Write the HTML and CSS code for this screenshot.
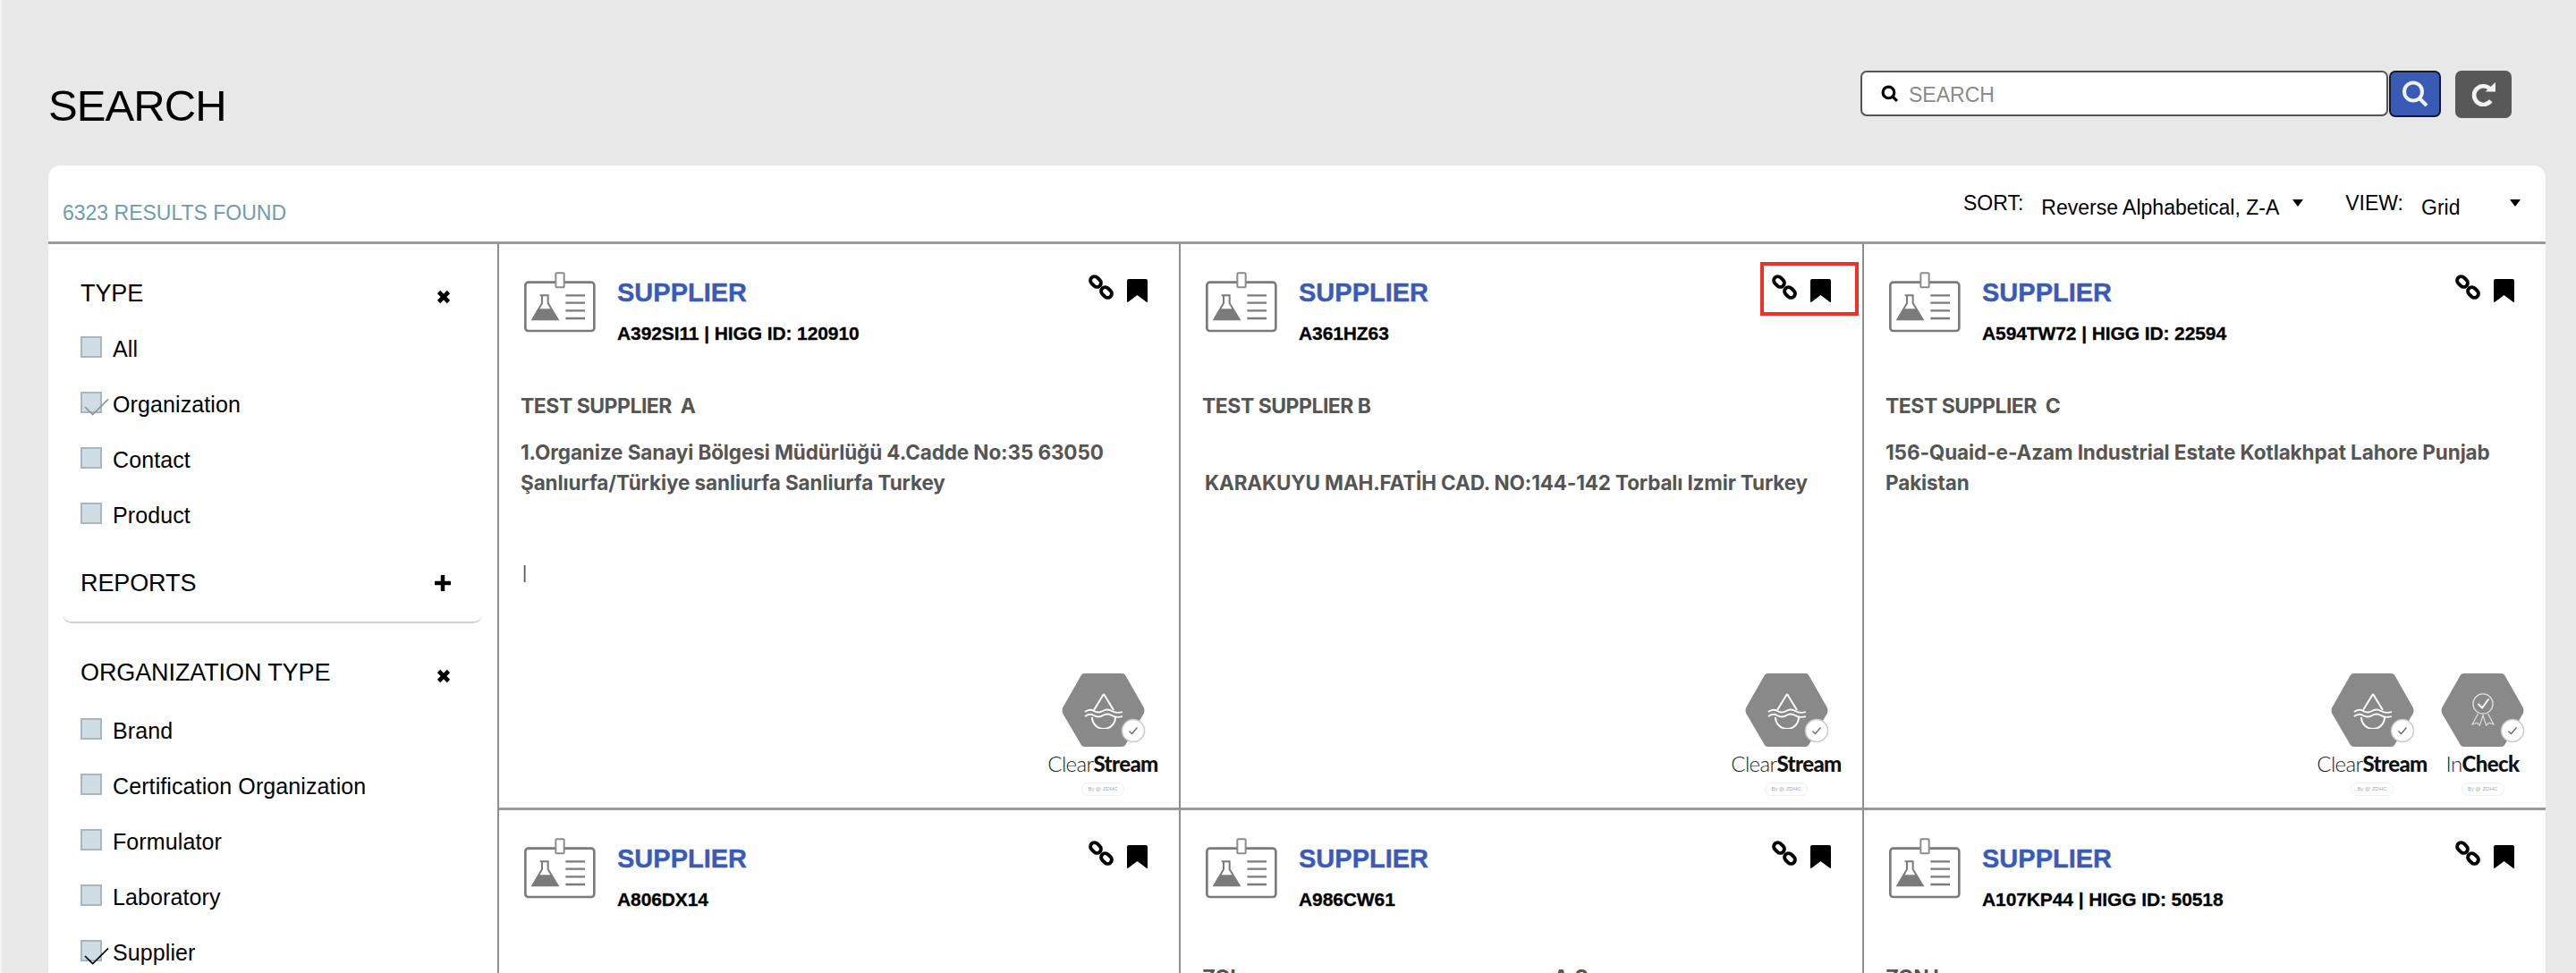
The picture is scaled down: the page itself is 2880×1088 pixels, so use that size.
FILE: index.html
```html
<!DOCTYPE html>
<html lang="en">
<head>
<meta charset="utf-8">
<title>Search</title>
<link rel="stylesheet" href="styles.css">
</head>
<body>
<svg class="sprites" width="0" height="0" aria-hidden="true">
  <symbol id="i-supplier" viewBox="78 72 240 204">
    <rect x="82" y="107" width="231" height="163" rx="10" fill="#fff" stroke="#7b7b7b" stroke-width="8"/>
    <rect x="184" y="76" width="28" height="48" rx="3" fill="#fff" stroke="#8c8c8c" stroke-width="6"/>
    <path d="M131 151h30M138 151v26l-32 55h85l-33-55v-26" fill="none" stroke="#7b7b7b" stroke-width="6"/>
    <path d="M127 196h43l20 36h-85z" fill="#7b7b7b"/>
    <path d="M217 151h65M217 176h65M217 202h65M217 228h65" stroke="#7b7b7b" stroke-width="7"/>
  </symbol>
  <symbol id="i-link" viewBox="0 0 30 30">
    <rect x="2.500" y="4.500" width="13" height="9" rx="4.500" transform="rotate(45 9 9)" fill="none" stroke="#000" stroke-width="3.900"/>
    <rect x="14.500" y="16.500" width="13" height="9" rx="4.500" transform="rotate(45 21 21)" fill="none" stroke="#000" stroke-width="3.900"/>
  </symbol>
  <symbol id="i-bookmark" viewBox="0 0 23 26">
    <path d="M0 2Q0 0 2 0H21Q23 0 23 2V25Q23 26.500 21.500 25.500L11.500 18 1.500 25.500Q0 26.500 0 25Z" fill="#000"/>
  </symbol>
  <symbol id="i-hex" viewBox="0 0 94 84">
    <path d="M22 2Q23 0 26 0H68Q71 0 72 2L93 39Q94 42 93 45L72 81Q71 83 68 83H26Q23 83 22 81L1 45Q0 42 1 39Z" fill="#898989"/>
  </symbol>
  <symbol id="i-check" viewBox="0 0 28 28">
    <circle cx="14" cy="14" r="12.500" fill="#fff" stroke="#c9c9c9" stroke-width="1.500"/>
    <path d="M9.500 14.500l3 3 6-7" fill="none" stroke="#666" stroke-width="1.300"/>
  </symbol>
  <symbol id="i-water" viewBox="0 0 44 40">
    <path d="M22 1L11 19M22 1l11 18M9 27a13 13 0 0 0 26 0" fill="none" stroke="#fff" stroke-width="2"/>
    <path d="M1 21q5-4 10-1t10 0 10 0 12 1M1 26q5-4 10-1t10 0 10 0 12 1" fill="none" stroke="#fff" stroke-width="1.800"/>
  </symbol>
  <symbol id="i-award" viewBox="0 0 28 40">
    <circle cx="14" cy="13" r="12" fill="none" stroke="#ddd" stroke-width="1.500"/>
    <path d="M8 13l5 5 8-11" fill="none" stroke="#fff" stroke-width="2"/>
    <path d="M8 25L1 38l6-2 3 3 4-12 4 12 3-3 6 2-7-13" fill="none" stroke="#ddd" stroke-width="1.300"/>
  </symbol>
  <symbol id="i-tick" viewBox="0 0 30 20">
    <path d="M1 10l9 9L28 1" fill="none" stroke="currentColor" stroke-width="1.700"/>
  </symbol>
  <symbol id="i-close" viewBox="0 0 16 16">
    <path d="M2.500 2.500l11 11M13.500 2.500l-11 11" stroke="#000" stroke-width="4.600"/>
  </symbol>
  <symbol id="i-plus" viewBox="0 0 18 18">
    <path d="M9 1v16M1 9h16" stroke="#000" stroke-width="4.400" stroke-linecap="round"/>
  </symbol>
</svg>

<div class="page">
  <header class="top">
    <h1 class="title">SEARCH</h1>
    <div class="tools">
      <div class="search-box">
        <svg class="search-glass" viewBox="0 0 18 18"><circle cx="8" cy="8" r="6" fill="none" stroke="#000" stroke-width="3"/><path d="M12 12l5 5" stroke="#000" stroke-width="3"/></svg>
        <span class="placeholder">SEARCH</span>
      </div>
      <button class="btn-go" type="button" aria-label="Search">
        <svg class="btn-go-icon" viewBox="0 0 30 30"><circle cx="13" cy="12.500" r="10" fill="none" stroke="#f1f1f1" stroke-width="4"/><path d="M20 20l8 8" stroke="#f1f1f1" stroke-width="4"/></svg>
      </button>
      <button class="btn-reset" type="button" aria-label="Reset">
        <svg class="btn-reset-icon" viewBox="0 0 28 26"><path d="M21 7A10 10 0 1 0 22 20" fill="none" stroke="#f3f3f3" stroke-width="4.500"/><path d="M16 10L27 10 27 0z" fill="#f3f3f3"/></svg>
      </button>
    </div>
  </header>

  <main class="panel">
    <div class="panel-head">
      <span class="count">6323 RESULTS FOUND</span>
      <div class="sorts">
        <span class="sort-label">SORT:</span>
        <span class="sort-value sort-value-long">Reverse Alphabetical, Z-A</span>
        <span class="caret caret-sort"></span>
        <span class="sort-label view-label">VIEW:</span>
        <span class="sort-value sort-value-short">Grid</span>
        <span class="caret"></span>
      </div>
    </div>

    <div class="panel-body">
      <aside class="sidebar">
        <section class="filter filter-type">
          <div class="filter-head"><h2 class="filter-title">TYPE</h2><svg class="icon-close"><use href="#i-close"/></svg></div>
          <label class="opt"><span class="box"></span>All</label>
          <label class="opt"><span class="box"><svg class="tick tick-grey"><use href="#i-tick"/></svg></span>Organization</label>
          <label class="opt"><span class="box"></span>Contact</label>
          <label class="opt"><span class="box"></span>Product</label>
        </section>
        <section class="filter filter-reports">
          <div class="filter-head"><h2 class="filter-title">REPORTS</h2><svg class="icon-plus"><use href="#i-plus"/></svg></div>
        </section>
        <section class="filter filter-org">
          <div class="filter-head"><h2 class="filter-title">ORGANIZATION TYPE</h2><svg class="icon-close"><use href="#i-close"/></svg></div>
          <label class="opt"><span class="box"></span>Brand</label>
          <label class="opt"><span class="box"></span>Certification Organization</label>
          <label class="opt"><span class="box"></span>Formulator</label>
          <label class="opt"><span class="box"></span>Laboratory</label>
          <label class="opt"><span class="box"><svg class="tick"><use href="#i-tick"/></svg></span>Supplier</label>
        </section>
      </aside>

      <div class="grid">
        <article class="cell">
          <div class="cell-head">
            <svg class="icon-supplier"><use href="#i-supplier"/></svg>
            <div class="cell-id"><div class="kind">SUPPLIER</div><div class="ref">A392SI11 | HIGG ID: 120910</div></div>
            <div class="actions"><svg class="icon-link"><use href="#i-link"/></svg><svg class="icon-bookmark"><use href="#i-bookmark"/></svg></div>
          </div>
          <div class="cell-text">
            <div class="name">TEST SUPPLIER &nbsp;A</div>
            <div class="addr">1.Organize Sanayi Bölgesi Müdürlüğü 4.Cadde No:35 63050<br>Şanlıurfa/Türkiye sanliurfa Sanliurfa Turkey</div>
            <div class="bar">|</div>
          </div>
          <div class="badges">
            <div class="badge badge-wide">
              <div class="hex"><svg class="hex-bg"><use href="#i-hex"/></svg><svg class="hex-water"><use href="#i-water"/></svg><svg class="hex-check"><use href="#i-check"/></svg></div>
              <div class="badge-name">Clear<b>Stream</b></div>
              <div class="pill">By @ ZDHC</div>
            </div>
          </div>
        </article>

        <article class="cell">
          <div class="cell-head">
            <svg class="icon-supplier"><use href="#i-supplier"/></svg>
            <div class="cell-id"><div class="kind">SUPPLIER</div><div class="ref">A361HZ63</div></div>
            <div class="actions"><svg class="icon-link"><use href="#i-link"/></svg><svg class="icon-bookmark"><use href="#i-bookmark"/></svg></div>
          </div>
          <div class="mark"></div>
          <div class="cell-text">
            <div class="name">TEST SUPPLIER B</div>
            <div class="addr addr-indent"><br>KARAKUYU MAH.FATİH CAD. NO:144-142 Torbalı Izmir Turkey</div>
          </div>
          <div class="badges">
            <div class="badge badge-wide">
              <div class="hex"><svg class="hex-bg"><use href="#i-hex"/></svg><svg class="hex-water"><use href="#i-water"/></svg><svg class="hex-check"><use href="#i-check"/></svg></div>
              <div class="badge-name">Clear<b>Stream</b></div>
              <div class="pill">By @ ZDHC</div>
            </div>
          </div>
        </article>

        <article class="cell cell-end">
          <div class="cell-head">
            <svg class="icon-supplier"><use href="#i-supplier"/></svg>
            <div class="cell-id"><div class="kind">SUPPLIER</div><div class="ref">A594TW72 | HIGG ID: 22594</div></div>
            <div class="actions"><svg class="icon-link"><use href="#i-link"/></svg><svg class="icon-bookmark"><use href="#i-bookmark"/></svg></div>
          </div>
          <div class="cell-text">
            <div class="name">TEST SUPPLIER &nbsp;C</div>
            <div class="addr">156-Quaid-e-Azam Industrial Estate Kotlakhpat Lahore Punjab<br>Pakistan</div>
          </div>
          <div class="badges">
            <div class="badge badge-wide">
              <div class="hex"><svg class="hex-bg"><use href="#i-hex"/></svg><svg class="hex-water"><use href="#i-water"/></svg><svg class="hex-check"><use href="#i-check"/></svg></div>
              <div class="badge-name">Clear<b>Stream</b></div>
              <div class="pill">By @ ZDHC</div>
            </div>
            <div class="badge">
              <div class="hex"><svg class="hex-bg"><use href="#i-hex"/></svg><svg class="hex-award"><use href="#i-award"/></svg><svg class="hex-check"><use href="#i-check"/></svg></div>
              <div class="badge-name">In<b>Check</b></div>
              <div class="pill">By @ ZDHC</div>
            </div>
          </div>
        </article>

        <article class="cell">
          <div class="cell-head">
            <svg class="icon-supplier"><use href="#i-supplier"/></svg>
            <div class="cell-id"><div class="kind">SUPPLIER</div><div class="ref">A806DX14</div></div>
            <div class="actions"><svg class="icon-link"><use href="#i-link"/></svg><svg class="icon-bookmark"><use href="#i-bookmark"/></svg></div>
          </div>
        </article>

        <article class="cell">
          <div class="cell-head">
            <svg class="icon-supplier"><use href="#i-supplier"/></svg>
            <div class="cell-id"><div class="kind">SUPPLIER</div><div class="ref">A986CW61</div></div>
            <div class="actions"><svg class="icon-link"><use href="#i-link"/></svg><svg class="icon-bookmark"><use href="#i-bookmark"/></svg></div>
          </div>
          <div class="cell-text">
            <div class="name name-low name-split"><span>ZOL</span><span>A.S</span></div>
          </div>
        </article>

        <article class="cell cell-end">
          <div class="cell-head">
            <svg class="icon-supplier"><use href="#i-supplier"/></svg>
            <div class="cell-id"><div class="kind">SUPPLIER</div><div class="ref">A107KP44 | HIGG ID: 50518</div></div>
            <div class="actions"><svg class="icon-link"><use href="#i-link"/></svg><svg class="icon-bookmark"><use href="#i-bookmark"/></svg></div>
          </div>
          <div class="cell-text">
            <div class="name name-low">ZON I</div>
          </div>
        </article>
      </div>
    </div>
  </main>
</div>
</body>
</html>
```

FILE: styles.css
```css
* { box-sizing: border-box; }
html, body { margin: 0; height: 1088px; overflow: hidden; }
body {
  background: #e8e8e8;
  border-left: 2px solid #f4f4f4;
  font-family: "Liberation Sans", Arial, sans-serif;
  color: #000;
}
.sprites { position: absolute; }
.page { padding: 0 34px 0 52px; }

.top { display: flex; align-items: flex-start; height: 185px; }
.title { margin: 89px 0 0; font-size: 49px; line-height: 58px; font-weight: 400; letter-spacing: -0.9px; }
.tools { display: flex; margin: 79px 38px 0 auto; }
.search-box {
  display: flex; align-items: center; width: 590px; height: 51px;
  background: #fff; border: 2px solid #555; border-radius: 7px; padding: 3px 0 0 21px;
}
.search-glass { width: 19px; height: 19px; margin: -3px 12px 0 0; }
.placeholder { font-size: 23px; color: #8a8a8a; }
.btn-go {
  display: flex; align-items: center; justify-content: center;
  width: 58px; height: 52px; margin-left: 1px; padding: 0;
  background: #3a5bb5; border: 2px solid #15192b; border-radius: 7px;
}
.btn-go-icon { width: 30px; height: 30px; }
.btn-reset {
  display: flex; align-items: center; justify-content: center;
  width: 63px; height: 53px; margin-left: 16px; padding: 0;
  background: #585858; border: 0; border-radius: 7px;
}
.btn-reset-icon { width: 29px; height: 27px; }

.panel { background: #fff; border-radius: 14px 14px 0 0; }
.panel-head {
  display: flex; height: 88px; padding: 0 0 0 16px;
  border-bottom: 3px solid #999;
}
.count { margin-top: 39px; font-size: 23px; line-height: 28px; color: #6f9bb0; }
.sorts { display: flex; align-items: flex-start; margin-left: auto; padding-top: 29px; font-size: 23px; line-height: 26px; }
.sort-value { margin-top: 5px; }
.sort-value-long { margin-left: 20px; }
.sort-value-short { margin-left: 20px; width: 99px; }
.view-label { margin-left: 47px; }
.caret {
  width: 0; height: 0; margin: 9px 28px 0 0;
  border-left: 6px solid transparent; border-right: 6px solid transparent; border-top: 8px solid #000;
}
.caret-sort { margin: 9px 0 0 15px; }

.panel-body { display: flex; align-items: flex-start; }
.sidebar {
  flex: 0 0 504px; height: 815px; padding: 24px 0 0 16px;
  border-right: 2px solid #8a9090;
}
.filter { margin-right: 17px; padding: 0 35px 0 20px; }
.filter-type { margin-bottom: 14px; }
.filter-reports { padding-bottom: 12px; border-bottom: 2px solid #cfcfcf; border-radius: 0 0 10px 10px; }
.filter-org { margin-top: 24px; }
.filter-head { display: flex; align-items: center; justify-content: space-between; height: 62px; }
.filter-org .filter-head { margin-bottom: 3px; }
.filter-title { margin: 0; font-size: 27px; font-weight: 400; letter-spacing: -0.1px; }
.icon-close { width: 16px; height: 16px; margin-top: 8px; }
.icon-plus { width: 18px; height: 18px; }

.opt { display: flex; align-items: center; height: 62px; font-size: 25px; letter-spacing: 0.1px; }
.box {
  position: relative; flex: none; width: 24px; height: 24px; margin: 0 12px 5px 0;
  background: #d0dde5; border: 2px solid #a9b6bd;
}
.tick { position: absolute; left: 2px; top: 6px; width: 29px; height: 20px; color: #000; }
.tick-grey { top: 5px; color: #8c9499; }

.grid {
  flex: 1; display: grid;
  grid-template-columns: 762px 764px 762px;
  grid-template-rows: 633px 300px;
}
.cell {
  position: relative; display: flex; flex-direction: column;
  padding-top: 31px;
  border-right: 2px solid #8a9090; border-bottom: 3px solid #9a9a9a;
}
.cell-end { border-right: 0; }
.cell-head { display: flex; align-items: flex-start; padding: 0 35px 0 28px; }
.icon-supplier { flex: none; width: 80px; height: 68px; margin-right: 24px; }
.cell-id { font-weight: 700; }
.kind { margin-top: 5px; font-size: 29px; line-height: 36px; color: #3a5bb5; -webkit-text-stroke: 0.4px #3a5bb5; }
.ref { margin-top: 16px; font-size: 21px; line-height: 24px; letter-spacing: -0.1px; -webkit-text-stroke: 0.3px #000; }
.actions { display: flex; align-items: flex-start; margin: 2px 0 0 auto; }
.icon-link { width: 30px; height: 30px; }
.icon-bookmark { width: 23px; height: 26px; margin: 6px 0 0 14px; }

.mark { position: absolute; top: 20px; right: 4px; width: 110px; height: 60px; border: 4px solid #ee3124; }

.cell-text { padding: 0 20px 0 24px; color: #555; font-family: Inter, "Liberation Sans", sans-serif; font-weight: 700; }
.name { margin-top: 54px; font-size: 23px; line-height: 30px; letter-spacing: -0.5px; }
.name-low { margin-top: 60px; }
.name-split { display: flex; gap: 349px; }
.addr { margin-top: 20px; font-size: 22.500px; line-height: 34px; letter-spacing: -0.1px; }
.addr-indent { padding-left: 3px; letter-spacing: -0.15px; }
.bar { margin: 71px 0 0 2px; font-family: "Liberation Sans", sans-serif; font-weight: 400; font-size: 20px; line-height: 24px; }

.badges { display: flex; justify-content: flex-end; gap: 17px; margin-top: auto; padding: 0 25px 13px 0; }
.cell-end .badges { padding-right: 24px; }
.badge { display: flex; flex-direction: column; align-items: center; width: 93px; }
.badge-wide { width: 120px; }
.hex { position: relative; width: 93px; height: 83px; }
.hex-bg { display: block; width: 93px; height: 83px; }
.hex-water { position: absolute; left: 25px; top: 22px; width: 44px; height: 40px; }
.hex-award { position: absolute; left: 34px; top: 22px; width: 26px; height: 37px; }
.hex-check { position: absolute; left: 66px; top: 50px; width: 28px; height: 28px; }
.badge-name { margin-top: 3px; font-family: Lato, sans-serif; font-weight: 300; font-size: 24px; line-height: 30px; letter-spacing: -0.6px; color: #222; white-space: nowrap; }
.badge-name b { font-weight: 900; color: #111; }
.pill { margin-top: 6px; width: 48px; height: 15px; border: 1px solid #eee; border-radius: 8px; font-size: 6px; line-height: 13px; text-align: center; color: #aaa; white-space: nowrap; }
```
